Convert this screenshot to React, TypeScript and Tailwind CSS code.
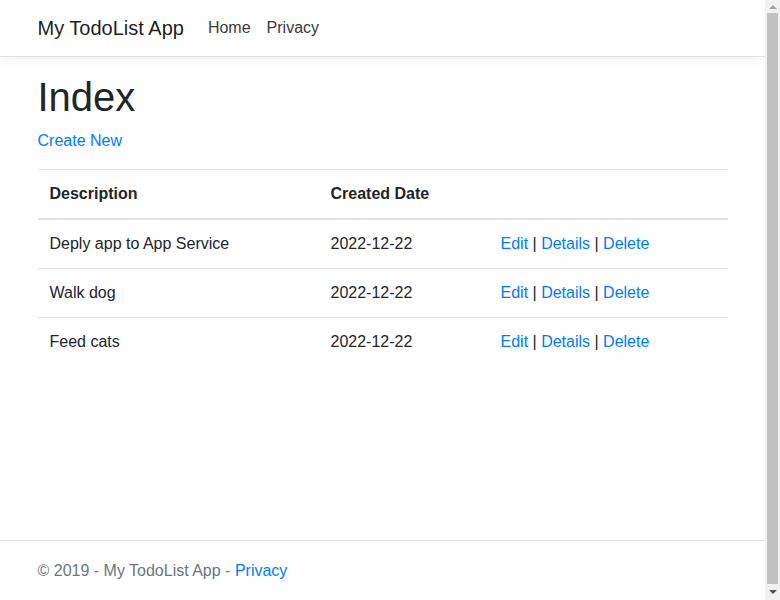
const todos = [
  { id: 1, description: 'Deply app to App Service', created: '2022-12-22' },
  { id: 2, description: 'Walk dog', created: '2022-12-22' },
  { id: 3, description: 'Feed cats', created: '2022-12-22' },
];

function Actions() {
  return (
    <>
      <a href="#" className="text-[#007bff]">Edit</a> |{' '}
      <a href="#" className="text-[#007bff]">Details</a> |{' '}
      <a href="#" className="text-[#007bff]">Delete</a>
    </>
  );
}

// browser scrollbar, as seen in the screenshot
function Scrollbar() {
  return (
    <div className="w-[15px] h-screen bg-[#f1f1f1] flex flex-col items-center shrink-0">
      <div className="h-[13px] flex items-center justify-center">
        <div className="w-0 h-0 border-l-[4px] border-r-[4px] border-b-[4px] border-l-transparent border-r-transparent border-b-[#a3a3a3]"></div>
      </div>
      <div className="flex-1 w-[11px] bg-[#c1c1c1]"></div>
      <div className="h-[16px] flex items-center justify-center">
        <div className="w-0 h-0 border-l-[4px] border-r-[4px] border-t-[4px] border-l-transparent border-r-transparent border-t-[#505050]"></div>
      </div>
    </div>
  );
}

export default function App() {
  return (
    <div className="flex font-['Liberation_Sans',Arial,sans-serif] text-[16px] leading-[1.5] text-[#212529] bg-white">
      <div className="flex-1 min-w-0 h-screen flex flex-col">
        <header>
          <nav className="h-[57px] bg-white border-b border-[#dee2e6] shadow-[0_4px_12px_rgba(0,0,0,0.05)] mb-4">
            <div className="mx-auto max-w-[720px] px-[15px] h-[56px] flex items-center">
              <a href="#" className="text-[20px] leading-[30px] text-[rgba(0,0,0,0.9)] mr-4">
                My TodoList App
              </a>
              <ul className="flex">
                <li>
                  <a href="#" className="block px-2 py-2 text-[#343a40]">Home</a>
                </li>
                <li>
                  <a href="#" className="block px-2 py-2 text-[#343a40]">Privacy</a>
                </li>
              </ul>
            </div>
          </nav>
        </header>

        <main className="mx-auto w-full max-w-[720px] px-[15px] pb-4">
          <h1 className="text-[40px] leading-[1.2] font-medium mb-2">Index</h1>
          <p className="mb-4">
            <a href="#" className="text-[#007bff]">Create New</a>
          </p>
          <table className="w-full table-fixed mb-4 border-collapse">
            <thead>
              <tr>
                <th className="w-[281px] p-3 text-left font-bold border-t border-b-2 border-[#dee2e6]">
                  Description
                </th>
                <th className="w-[170px] p-3 text-left font-bold border-t border-b-2 border-[#dee2e6]">
                  Created Date
                </th>
                <th className="p-3 border-t border-b-2 border-[#dee2e6]"></th>
              </tr>
            </thead>
            <tbody>
              {todos.map((t, i) => (
                <tr key={t.id}>
                  <td className={`p-3 ${i > 0 ? 'border-t border-[#dee2e6]' : ''}`}>{t.description}</td>
                  <td className={`p-3 ${i > 0 ? 'border-t border-[#dee2e6]' : ''}`}>{t.created}</td>
                  <td className={`p-3 ${i > 0 ? 'border-t border-[#dee2e6]' : ''}`}>
                    <Actions />
                  </td>
                </tr>
              ))}
            </tbody>
          </table>
        </main>

        <footer className="mt-auto border-t border-[#dee2e6] text-[#6c757d] whitespace-nowrap leading-[59px]">
          <div className="mx-auto max-w-[720px] px-[15px]">
            &copy; 2019 - My TodoList App - <a href="#" className="text-[#007bff]">Privacy</a>
          </div>
        </footer>
      </div>
      <Scrollbar />
    </div>
  );
}
